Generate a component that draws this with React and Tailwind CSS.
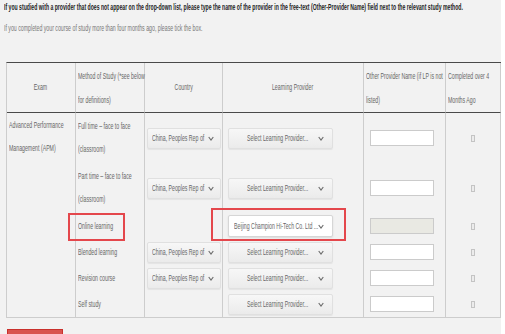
import React from "react";

const font = "font-['Liberation_Sans',Arial,sans-serif]";

function S({ children, center }) {
  return (
    <span className={`inline-block whitespace-nowrap scale-x-[0.58] ${center ? "origin-center" : "origin-left"}`}>
      {children}
    </span>
  );
}

function Chev() {
  return (
    <svg width="6" height="5" viewBox="0 0 6 5" className="shrink-0">
      <polyline points="0.7,1 3,4 5.3,1" fill="none" stroke="#6a6a6a" strokeWidth="1.1" />
    </svg>
  );
}

function CountrySelect() {
  return (
    <div className="mx-auto flex h-[21px] w-[74px] items-center rounded-[2px] border border-[#e0e0e0] bg-linear-to-b from-[#f7f7f7] to-[#ebebeb] pl-[4px] pr-[6px] shadow-[0_1px_1px_rgba(0,0,0,0.06)]">
      <div className="min-w-0 flex-1 leading-[19px]"><S>China, Peoples Rep of</S></div>
      <Chev />
    </div>
  );
}

function ProviderSelect({ filled }) {
  if (filled) {
    return (
      <div className="ml-[5px] flex h-[22px] w-[105px] items-center rounded-[2px] border border-[#d6d6d6] bg-white pl-[5px] pr-[8px] shadow-[0_1px_2px_rgba(0,0,0,0.1)]">
        <div className="min-w-0 flex-1 leading-[20px]"><S>Beijing Champion Hi-Tech Co. Ltd ...</S></div>
        <Chev />
      </div>
    );
  }
  return (
    <div className="ml-[5px] flex h-[21px] w-[105px] items-center rounded-[2px] border border-[#e0e0e0] bg-linear-to-b from-[#f7f7f7] to-[#ebebeb] pl-[18px] pr-[8px] shadow-[0_1px_1px_rgba(0,0,0,0.06)]">
      <div className="min-w-0 flex-1 leading-[19px]"><S>Select Learning Provider...</S></div>
      <Chev />
    </div>
  );
}

const rows = [
  { method: ["Full time – face to face", "(classroom)"], country: true, tall: true },
  { method: ["Part time – face to face", "(classroom)"], country: true, tall: true },
  { method: ["Online learning"], country: false, filled: true },
  { method: ["Blended learning"], country: true },
  { method: ["Revision course"], country: true },
  { method: ["Self study"], country: false },
];

export default function App() {
  return (
    <div className={`${font} h-[334px] w-[505px] overflow-hidden bg-white text-[9px] text-[#666]`}>
      <div className="w-[501px] bg-[#f2f2f2] pb-[20px]">
        <div className="h-[14px] pl-[4px] font-bold leading-[14px] text-[#222]">
          <span className="inline-block whitespace-nowrap origin-left scale-x-[0.57]">
            If you studied with a provider that does not appear on the drop-down list, please type the name of the provider in the free-text (Other-Provider Name) field next to the relevant study method.
          </span>
        </div>
        <div className="mt-[7px] h-[14px] pl-[4px] leading-[14px] text-[#777]">
          <S>If you completed your course of study more than four months ago, please tick the box.</S>
        </div>

        <div className="mt-[27px] pl-[6px]">
          <table className="w-[495px] table-fixed border-separate border-spacing-0 border-l border-b border-t border-l-[#cdcdcd] border-b-[#cdcdcd] border-t-[#4a4a4a]">
            <thead>
              <tr className="h-[50px]">
                <th className="w-[69px] border-r border-b border-r-[#cdcdcd] border-b-[#4a4a4a] text-center font-normal"><S center>Exam</S></th>
                <th className="w-[69px] border-r border-b border-r-[#cdcdcd] border-b-[#4a4a4a] pl-[2px] text-left font-normal leading-[24px]">
                  <div><S>Method of Study (*see below</S></div>
                  <div><S>for definitions)</S></div>
                </th>
                <th className="w-[78px] border-r border-b border-r-[#cdcdcd] border-b-[#4a4a4a] text-center font-normal"><S center>Country</S></th>
                <th className="w-[141px] border-r border-b border-r-[#cdcdcd] border-b-[#4a4a4a] text-center font-normal"><S center>Learning Provider</S></th>
                <th className="w-[82px] border-r border-b border-r-[#cdcdcd] border-b-[#4a4a4a] pl-[2px] text-left font-normal leading-[24px]">
                  <div><S>Other Provider Name (if LP is not</S></div>
                  <div><S>listed)</S></div>
                </th>
                <th className="w-[55px] border-r border-b border-r-[#cdcdcd] border-b-[#4a4a4a] pl-[2px] text-left font-normal leading-[24px]">
                  <div><S>Completed over 4</S></div>
                  <div><S>Months Ago</S></div>
                </th>
              </tr>
            </thead>
            <tbody>
              {rows.map((r, i) => (
                <tr key={i} className={r.tall ? "h-[50px]" : "h-[26px]"}>
                  {i === 0 && (
                    <td rowSpan={6} className="border-r border-[#cdcdcd] pl-[2px] pt-[1px] align-top leading-[23px]">
                      <div><S>Advanced Performance</S></div>
                      <div><S>Management (APM)</S></div>
                    </td>
                  )}
                  <td className="relative border-r border-[#cdcdcd] pl-[2px] leading-[23px]">
                    {r.method.map((m) => (
                      <div key={m}><S>{m}</S></div>
                    ))}
                    {r.filled && (
                      <div className="absolute left-[-8px] top-0 h-[28px] w-[57px] border-2 border-[#e4474c]" />
                    )}
                  </td>
                  <td className="border-r border-[#cdcdcd]">{r.country && <CountrySelect />}</td>
                  <td className="relative border-r border-[#cdcdcd]">
                    <ProviderSelect filled={r.filled} />
                    {r.filled && (
                      <div className="absolute left-[-12px] top-[-5px] h-[33px] w-[135px] border-2 border-[#e4474c]" />
                    )}
                  </td>
                  <td className="border-r border-[#cdcdcd]">
                    <div className={`ml-[6px] h-[16px] w-[64px] border border-[#cbcbcb] ${r.filled ? "bg-[#e9e9e3]" : "bg-white"}`} />
                  </td>
                  <td className="border-r border-[#cdcdcd]">
                    <div className="mx-auto h-[7px] w-[4px] border border-[#c4c4c4] bg-[#ececec]" />
                  </td>
                </tr>
              ))}
            </tbody>
          </table>
        </div>

        <div className="ml-[7px] mt-[11px] h-[22px] w-[56px] border border-[#c9302c] bg-[#d9534f]" />
      </div>
    </div>
  );
}
